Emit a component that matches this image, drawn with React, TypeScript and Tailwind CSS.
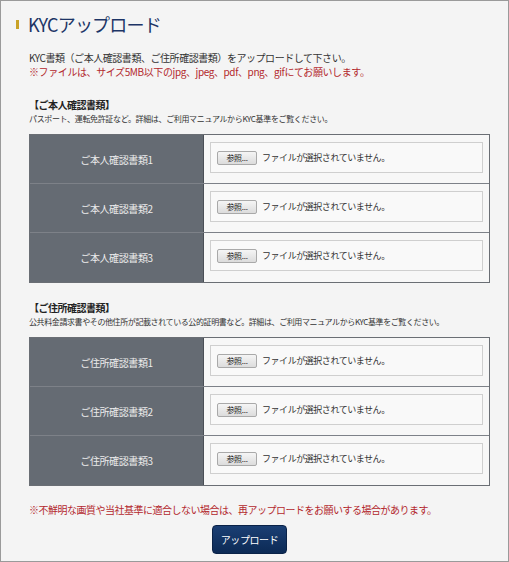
import React from "react";

const FONT = '"Noto Sans CJK JP", "Noto Sans", sans-serif';

function Row({ label, last }: { label: string; last?: boolean }) {
  return (
    <div className={`flex h-[49px] ${last ? "" : "border-b border-[#7d8188]"}`}>
      <div className="w-[174px] shrink-0 bg-[#656b73] flex items-center justify-center border-r border-[#4a4f56]">
        <span className="text-[10px] tracking-[-0.4px] text-[#ececec]">{label}</span>
      </div>
      <div className="flex-1 bg-[#f7f7f7] px-[6px] py-[7px]">
        <div className="h-[31px] border border-[#cfcfcf] bg-[#f9f9f9] flex items-center pl-[6px]">
          <div className="w-[40px] h-[14px] rounded-[2px] border border-[#a9a9a9] bg-gradient-to-b from-[#f5f5f5] to-[#dcdcdc] flex items-center justify-center text-[8px] tracking-[-0.3px] text-[#222] leading-none">
            参照...
          </div>
          <span className="ml-[5px] text-[9px] tracking-[-0.45px] text-[#333]">ファイルが選択されていません。</span>
        </div>
      </div>
    </div>
  );
}

function Table({ prefix }: { prefix: string }) {
  return (
    <div className="w-[461px] border border-[#6a6e74] bg-[#f7f7f7]">
      <Row label={`${prefix}1`} />
      <Row label={`${prefix}2`} />
      <Row label={`${prefix}3`} last />
    </div>
  );
}

export default function App() {
  return (
    <div
      className="w-[509px] h-[562px] bg-[#f4f4f4] border border-[#9a9a9a] flex flex-col"
      style={{ fontFamily: FONT }}
    >
      <div className="flex items-center h-[22px] mt-[12px] pl-[15px]">
        <div className="w-[3px] h-[9px] bg-[#c9a227]" />
        <span className="ml-[9px] text-[18px] tracking-[-0.8px] leading-[22px] text-[#1d3566]">KYCアップロード</span>
      </div>

      <div className="pl-[28px] flex flex-col">
        <p className="mt-[16px] h-[14px] leading-[14px] text-[10px] tracking-[-0.45px] text-[#333]">
          KYC書類（ご本人確認書類、ご住所確認書類）をアップロードして下さい。
        </p>
        <p className="h-[14px] leading-[14px] text-[10px] tracking-[-0.4px] text-[#b3282d]">
          ※ファイルは、サイズ5MB以下のjpg、jpeg、pdf、png、gifにてお願いします。
        </p>

        <p className="mt-[19px] h-[14px] leading-[14px] text-[10px] tracking-[-0.5px] font-bold text-[#222]">
          【ご本人確認書類】
        </p>
        <p className="h-[14px] leading-[14px] text-[8px] tracking-[-0.35px] text-[#333]">
          パスポート、運転免許証など。詳細は、ご利用マニュアルからKYC基準をご覧ください。
        </p>
        <div className="mt-[8px]">
          <Table prefix="ご本人確認書類" />
        </div>

        <p className="mt-[18px] h-[14px] leading-[14px] text-[10px] tracking-[-0.5px] font-bold text-[#222]">
          【ご住所確認書類】
        </p>
        <p className="h-[14px] leading-[14px] text-[8px] tracking-[-0.4px] text-[#333]">
          公共料金請求書やその他住所が記載されている公的証明書など。詳細は、ご利用マニュアルからKYC基準をご覧ください。
        </p>
        <div className="mt-[8px]">
          <Table prefix="ご住所確認書類" />
        </div>

        <p className="mt-[17px] h-[14px] leading-[14px] text-[10px] tracking-[-0.5px] text-[#b3282d]">
          ※不鮮明な画質や当社基準に適合しない場合は、再アップロードをお願いする場合があります。
        </p>

        <div className="mt-[8px] ml-[183px] w-[75px] h-[29px] rounded-[4px] bg-gradient-to-b from-[#1b3f74] to-[#0c2a55] border border-[#0a2247] flex items-center justify-center">
          <span className="text-[10px] tracking-[-0.4px] text-white">アップロード</span>
        </div>
      </div>
    </div>
  );
}
